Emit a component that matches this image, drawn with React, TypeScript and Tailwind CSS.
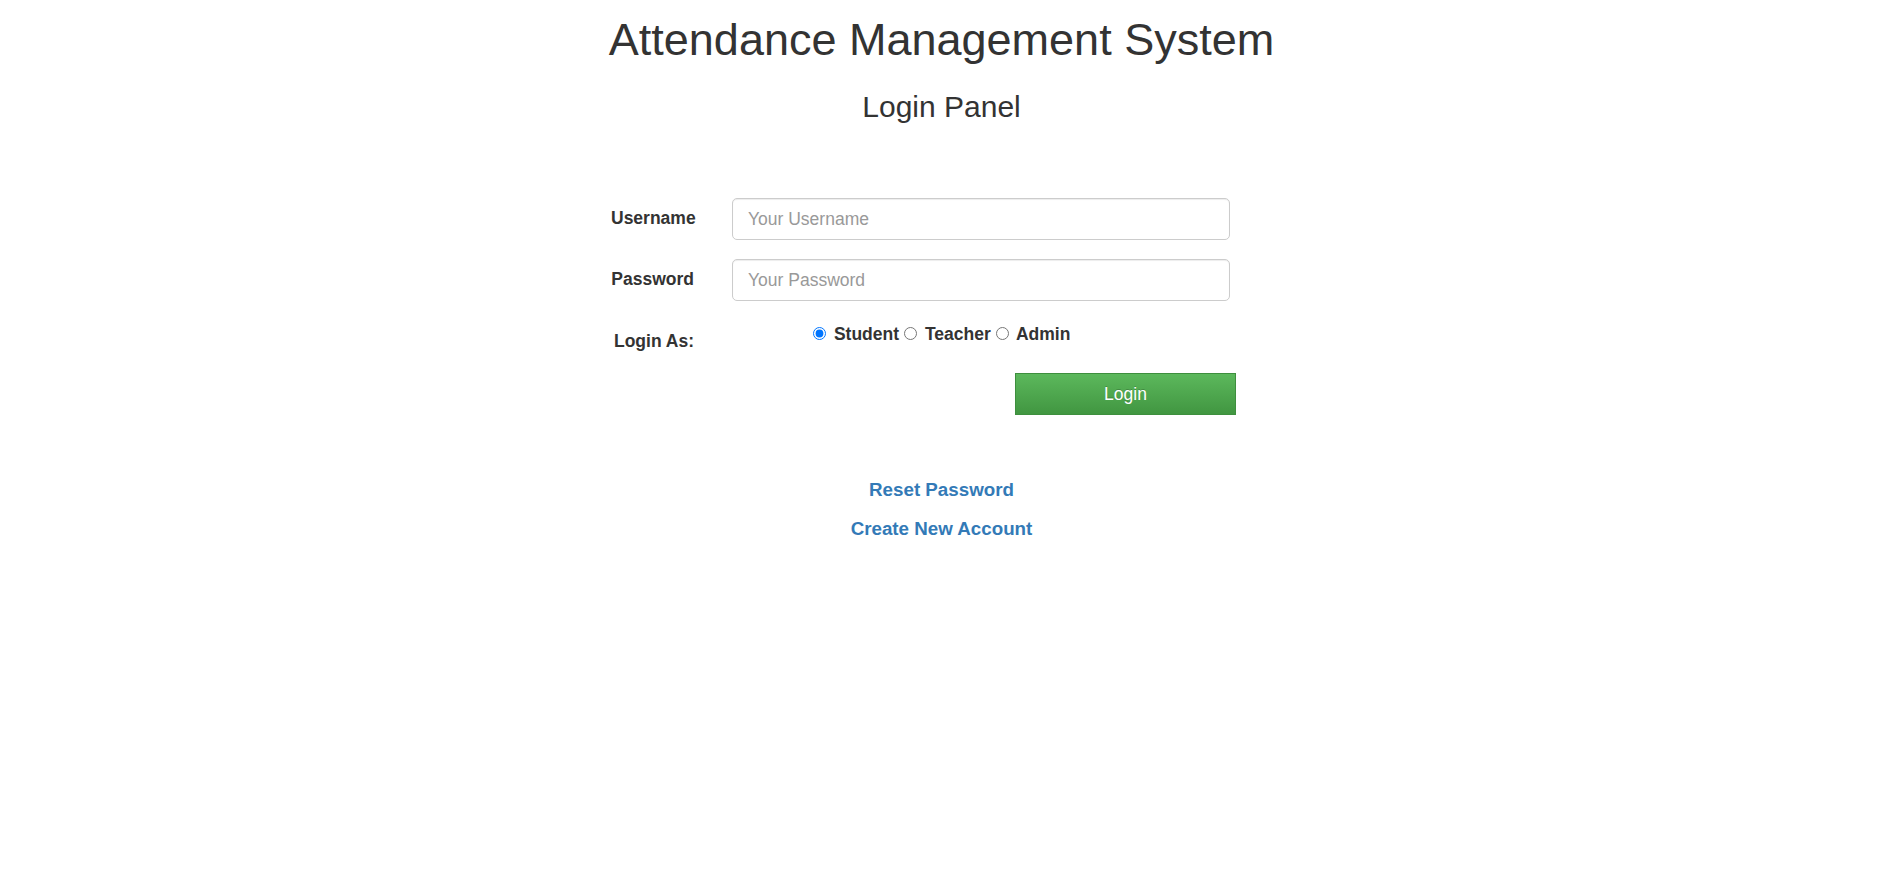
import React from "react";

export default function App() {
  return (
    <div className="min-h-[892px] w-full bg-white font-['Liberation_Sans',Arial,sans-serif] text-[#333]">
      <h1 className="pt-[15px] text-center text-[45px] font-normal leading-[50px]">
        Attendance Management System
      </h1>
      <h3 className="mt-[25px] text-center text-[30px] font-normal leading-[33px]">
        Login Panel
      </h3>

      <form className="mx-auto mt-[75px] w-[661px]" onSubmit={(e) => e.preventDefault()}>
        <div className="flex h-[42px] items-center">
          <label className="w-[83px] pb-[2px] text-right text-[17.5px] font-bold leading-[25px]">
            Username
          </label>
          <input
            type="text"
            placeholder="Your Username"
            className="ml-[38px] h-[42px] w-[498px] rounded-[5px] border border-[#ccc] bg-white px-[15px] text-[17.5px] text-[#555] shadow-[inset_0_1px_1px_rgba(0,0,0,0.075)] outline-none placeholder:text-[#999]"
          />
        </div>
        <div className="mt-[19px] flex h-[42px] items-center">
          <label className="w-[83px] pb-[2px] text-right text-[17.5px] font-bold leading-[25px]">
            Password
          </label>
          <input
            type="password"
            placeholder="Your Password"
            className="ml-[38px] h-[42px] w-[498px] rounded-[5px] border border-[#ccc] bg-white px-[15px] text-[17.5px] text-[#555] shadow-[inset_0_1px_1px_rgba(0,0,0,0.075)] outline-none placeholder:text-[#999]"
          />
        </div>

        <div className="mt-[21px] flex items-start">
          <label className="w-[83px] whitespace-nowrap pt-[7px] text-right text-[17.5px] font-bold leading-[25px]">
            Login As:
          </label>
          <div className="ml-[114px] whitespace-nowrap text-[17.5px] font-bold leading-[25px]">
            <input
              type="radio"
              name="role"
              defaultChecked
              className="ml-[5px] mr-[3px] mt-[3px] h-[13px] w-[13px]"
            />{" "}
            Student
            <input type="radio" name="role" className="ml-[5px] mr-[3px] mt-[3px] h-[13px] w-[13px]" />{" "}
            Teacher
            <input type="radio" name="role" className="ml-[5px] mr-[3px] mt-[3px] h-[13px] w-[13px]" />{" "}
            Admin
          </div>
        </div>

        <button
          type="submit"
          className="ml-[404px] mt-[19px] block h-[42px] w-[221px] border border-[#3e8f3e] bg-[linear-gradient(to_bottom,#5cb85c_0%,#419641_100%)] text-[17.5px] text-white [text-shadow:0_-1px_0_rgba(0,0,0,0.2)]"
        >
          Login
        </button>
      </form>

      <div className="mt-[62px] flex flex-col items-center gap-[13px]">
        <a href="#" className="text-[18.75px] font-bold leading-[26px] text-[#337ab7]">
          Reset Password
        </a>
        <a href="#" className="text-[18.75px] font-bold leading-[26px] text-[#337ab7]">
          Create New Account
        </a>
      </div>
    </div>
  );
}
